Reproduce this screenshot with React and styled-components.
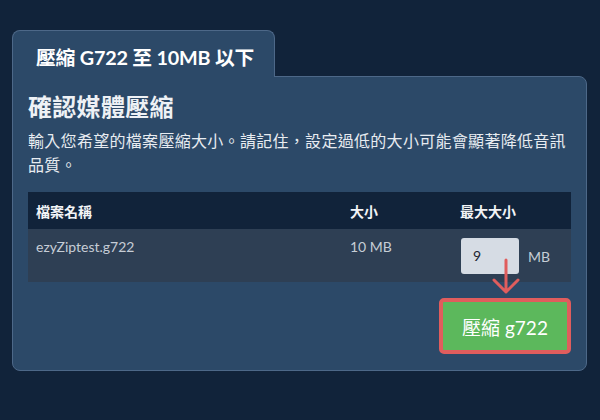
import React from "react";
import styled, { createGlobalStyle } from "styled-components";

const Global = createGlobalStyle`
  html, body { margin: 0; padding: 0; background: #11233a; }
  body { font-family: Lato, "Noto Sans CJK TC", sans-serif; color: #fff; }
`;

const Page = styled.div`
  width: 600px;
  height: 420px;
  box-sizing: border-box;
  padding: 30px 13px 0 12px;
  background: #11233a;
`;

const Tab = styled.div`
  position: relative;
  z-index: 1;
  display: inline-block;
  box-sizing: border-box;
  width: 263px;
  height: 47px;
  margin-bottom: -1px;
  padding: 11px 0 0 23px;
  background: #2c4968;
  border: 1px solid #4d6888;
  border-bottom: none;
  border-radius: 8px 8px 0 0;
  font-size: 19.8px;
  font-weight: 700;
  letter-spacing: -0.2px;
  color: #ffffff;
`;

const Panel = styled.div`
  box-sizing: border-box;
  width: 575px;
  height: 295px;
  padding: 14px 15px 15px 15px;
  background: #2c4968;
  border: 1px solid #4d6888;
  border-radius: 0 8px 8px 8px;
  display: flex;
  flex-direction: column;
`;

const Heading = styled.h2`
  margin: 0;
  font-size: 24px;
  line-height: 32px;
  font-weight: 700;
  color: #eef1f5;
  letter-spacing: 0.3px;
`;

const Desc = styled.p`
  margin: 6px 0 0 0;
  font-size: 16px;
  line-height: 24px;
  letter-spacing: 0.3px;
  color: #e8ecf1;
`;

const Table = styled.div`
  margin-top: 15px;
  display: grid;
  grid-template-columns: 314px 110px 1fr;
`;

const HeadCell = styled.div`
  background: #11233a;
  height: 37px;
  padding: 0 8px;
  display: flex;
  align-items: center;
  font-size: 14px;
  font-weight: 700;
  color: #f2f4f7;
`;

const Cell = styled.div`
  background: #2e3f54;
  height: 53px;
  box-sizing: border-box;
  padding: 9px 8px;
  font-size: 14px;
  color: #c6cdd6;
  display: flex;
  align-items: ${(p) => (p.$input ? "center" : "flex-start")};
`;

const InputWrap = styled.div`
  position: relative;
  display: flex;
  align-items: center;
  gap: 9px;
  margin-left: 1px;
`;

const SizeInput = styled.div`
  box-sizing: border-box;
  width: 58px;
  height: 36px;
  padding: 0 12px;
  background: #d6dce4;
  border-radius: 3px;
  display: flex;
  align-items: center;
  font-size: 14px;
  color: #1b2431;
`;

const Unit = styled.span`
  font-size: 14px;
  color: #c6cdd6;
  margin-top: 2px;
`;

const Arrow = styled.svg`
  position: absolute;
  left: 30px;
  top: 22px;
  overflow: visible;
`;

const Footer = styled.div`
  margin-top: 16px;
  display: flex;
  justify-content: flex-end;
`;

const Button = styled.button`
  box-sizing: border-box;
  width: 132px;
  height: 56px;
  background: #5cb85c;
  border: 4px solid #e05d5d;
  border-radius: 5px;
  color: #ffffff;
  font-family: Lato, "Noto Sans CJK TC", sans-serif;
  font-size: 19px;
  font-weight: 400;
  padding: 0;
  cursor: pointer;
`;

export default function App() {
  return (
    <Page>
      <Global />
      <Tab>壓縮 G722 至 10MB 以下</Tab>
      <Panel>
        <Heading>確認媒體壓縮</Heading>
        <Desc>
          輸入您希望的檔案壓縮大小。請記住，設定過低的大小可能會顯著降低音訊品質。
        </Desc>
        <Table>
          <HeadCell>檔案名稱</HeadCell>
          <HeadCell>大小</HeadCell>
          <HeadCell>最大大小</HeadCell>
          <Cell>ezyZiptest.g722</Cell>
          <Cell>10 MB</Cell>
          <Cell $input>
            <InputWrap>
              <SizeInput>9</SizeInput>
              <Unit>MB</Unit>
              <Arrow width="30" height="36" viewBox="0 0 30 36">
                <path
                  d="M15 0 V32 M3 20 L15 32 L27 20"
                  fill="none"
                  stroke="#e05d5d"
                  strokeWidth="3"
                  strokeLinecap="round"
                  strokeLinejoin="round"
                />
              </Arrow>
            </InputWrap>
          </Cell>
        </Table>
        <Footer>
          <Button>壓縮 g722</Button>
        </Footer>
      </Panel>
    </Page>
  );
}
